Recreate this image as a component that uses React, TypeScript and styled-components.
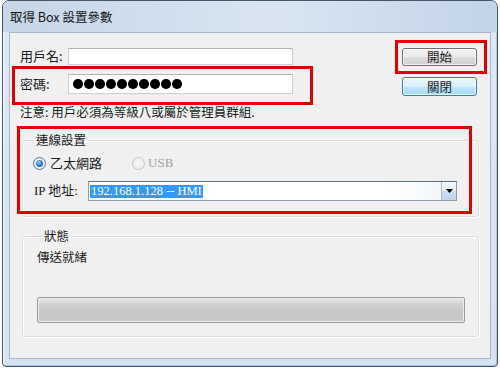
import React from "react";
import styled, { createGlobalStyle } from "styled-components";

const Global = createGlobalStyle`
  html, body { margin: 0; padding: 0; background: #ffffff; }
  body { font-family: "Noto Sans CJK TC", "Liberation Sans", sans-serif; font-size: 12px; color: #1a1a1a; }
  * { box-sizing: border-box; }
`;

const Window = styled.div`
  margin-left: 2px;
  width: 496px;
  height: 367px;
  border: 1px solid #45566a;
  border-radius: 7px 7px 4px 4px;
  background: linear-gradient(to bottom, #d9e5f2 0px, #c8d8ea 31px, #dde8f4 32px, #d4e2f1 100%);
  box-shadow: inset 1px 1px 0 #f4f8fc, inset -1px -1px 0 #a9c4e2;
  display: flex;
  flex-direction: column;
  overflow: hidden;
`;

const TitleBar = styled.div`
  height: 31px;
  padding-left: 7px;
  display: flex;
  align-items: center;
  font-size: 12.5px;
  color: #141414;
  background: linear-gradient(to right, #c6d5e7, #d9e5f2 55%, #c3d4e8);
`;

const Client = styled.div`
  margin: 0 6px;
  height: 327px;
  border: 1px solid #a8b7c8;
  background: #f0f0f0;
  display: flex;
  flex-direction: column;
`;

const TopSection = styled.div`
  display: flex;
  margin-top: 7px;
`;

const LeftCol = styled.div`
  margin-left: 2px;
  width: 301px;
  padding-top: 7px;
  display: flex;
  flex-direction: column;
`;

const FieldRow = styled.div<{ $h: number; $pad: number }>`
  height: ${(p) => p.$h}px;
  padding-left: ${(p) => p.$pad}px;
  display: flex;
  align-items: center;
`;

const Label = styled.span<{ $w: number }>`
  width: ${(p) => p.$w}px;
  line-height: 14px;
  font-size: 13px;
  flex: none;
`;

const TextBox = styled.div<{ $h: number }>`
  width: 225px;
  height: ${(p) => p.$h}px;
  background: #ffffff;
  border: 1px solid #c9cfd6;
  border-top-color: #abb3bc;
  display: flex;
  align-items: center;
  padding-left: 4px;
  gap: 1.5px;
`;

const Dot = styled.span`
  width: 9.5px;
  height: 9.5px;
  border-radius: 50%;
  background: #000;
  flex: none;
`;

const RedBox = styled.div`
  border: 3px solid #e00000;
  margin-top: 1px;
  height: 39px;
  padding: 5px 0 0 5px;
`;

const Note = styled.div`
  padding-left: 8px;
  line-height: 14px;
  font-size: 12.5px;
  white-space: nowrap;
`;

const RightCol = styled.div`
  margin-left: 82px;
  display: flex;
  flex-direction: column;
`;

const RedButtonBox = styled.div`
  border: 3px solid #e00000;
  width: 92px;
  height: 34px;
  padding: 5px 0 0 4px;
`;

const Button = styled.button<{ $focus?: boolean }>`
  width: 75px;
  height: ${(p) => (p.$focus ? 19 : 18)}px;
  margin: 0;
  padding: 0;
  font-family: "Noto Sans CJK TC", sans-serif;
  font-size: 12.5px;
  line-height: 14px;
  color: #1a1a1a;
  border-radius: 3px;
  border: 1px solid ${(p) => (p.$focus ? "#3c7fb1" : "#707070")};
  background: ${(p) =>
    p.$focus
      ? "linear-gradient(to bottom, #eaf6fd 0%, #d9f0fc 50%, #bee6fd 51%, #a7d9f5 100%)"
      : "linear-gradient(to bottom, #f2f2f2 0%, #ebebeb 50%, #dddddd 51%, #cfcfcf 100%)"};
  box-shadow: inset 0 0 0 1px rgba(255, 255, 255, 0.7);
`;

const CloseButton = styled(Button)`
  margin: 3px 0 0 7px;
`;

const GroupWrap = styled.div<{ $mt: number }>`
  position: relative;
  margin: ${(p) => p.$mt}px 11px 0 12px;
`;

const Group = styled.fieldset<{ $pl: number; $pb: number }>`
  margin: 0;
  min-width: 0;
  padding: 0 0 ${(p) => p.$pb}px ${(p) => p.$pl}px;
  border: 1px solid #d5dfe5;
  border-radius: 3px;
  box-shadow: 1px 1px 0 #ffffff, inset 1px 1px 0 #ffffff;
`;

const Legend = styled.legend<{ $ml: number }>`
  margin-left: ${(p) => p.$ml}px;
  padding: 0 2px;
  line-height: 14px;
  font-size: 12.5px;
`;

const RedOverlay = styled.div`
  position: absolute;
  left: -5px;
  top: -7px;
  width: 455px;
  height: 88px;
  border: 3px solid #e00000;
  pointer-events: none;
`;

const RadioRow = styled.div`
  margin-top: 8px;
  height: 16px;
  display: flex;
  align-items: center;
`;

const Radio = styled.span<{ $checked?: boolean; $disabled?: boolean }>`
  width: 13px;
  height: 13px;
  border-radius: 50%;
  flex: none;
  border: 1px solid ${(p) => (p.$disabled ? "#c6c6c6" : "#5e7894")};
  background: ${(p) =>
    p.$disabled
      ? "radial-gradient(circle at 50% 50%, #f7f7f7 0, #e9e9e9 100%)"
      : "radial-gradient(circle at 50% 50%, #ffffff 0, #dfe3e8 100%)"};
  display: flex;
  align-items: center;
  justify-content: center;
  &::after {
    content: "";
    display: ${(p) => (p.$checked ? "block" : "none")};
    width: 7px;
    height: 7px;
    border-radius: 50%;
    background: radial-gradient(circle at 40% 35%, #9fd0f7 0, #3c86cf 45%, #1c4f8a 100%);
  }
`;

const RadioLabel = styled.span<{ $disabled?: boolean }>`
  margin-left: ${(p) => (p.$disabled ? 3 : 4)}px;
  line-height: 14px;
  color: ${(p) => (p.$disabled ? "#a3a3a3" : "#1a1a1a")};
  font-family: ${(p) =>
    p.$disabled ? '"Liberation Serif", serif' : '"Noto Sans CJK TC", sans-serif'};
  font-size: 13px;
`;

const Spacer = styled.span<{ $w: number }>`
  width: ${(p) => p.$w}px;
  flex: none;
`;

const IPRow = styled.div`
  margin-top: 10px;
  height: 20px;
  display: flex;
  align-items: center;
`;

const IPLabel = styled.span`
  width: 55px;
  padding-left: 1px;
  line-height: 14px;
  font-family: "Liberation Serif", "Noto Sans CJK TC", serif;
  font-size: 13px;
  flex: none;
`;

const Combo = styled.div`
  width: 369px;
  height: 20px;
  border: 1px solid #8e9aa8;
  border-top-color: #5d6d7e;
  background: linear-gradient(to right, #ffffff 80%, #f1f5f9 100%);
  display: flex;
  align-items: center;
  padding-left: 1px;
`;

const Selected = styled.span`
  background: #3399ff;
  color: #ffffff;
  font-family: "Liberation Serif", serif;
  font-size: 12.5px;
  line-height: 13px;
  padding: 0 1px;
`;

const DropButton = styled.span`
  margin-left: auto;
  width: 15px;
  height: 18px;
  border-left: 1px solid #a8bdd2;
  background: linear-gradient(to bottom, #f4f9fe 0%, #e1eef9 50%, #c9e0f3 51%, #bcd6ee 100%);
  display: flex;
  align-items: center;
  justify-content: center;
`;

const StatusText = styled.div`
  margin-top: 7px;
  line-height: 14px;
  font-size: 12.5px;
`;

const Progress = styled.div`
  margin-top: 33px;
  width: 428px;
  height: 26px;
  border: 1px solid #9a9a9a;
  border-radius: 2px;
  background: linear-gradient(to bottom, #e9e9e9 0%, #d2d2d2 25%, #c6c6c6 60%, #c9c9c9 100%);
  box-shadow: inset 0 0 0 1px #ededed;
`;

export default function App() {
  return (
    <>
      <Global />
      <Window>
        <TitleBar>取得 Box 設置參數</TitleBar>
        <Client>
          <TopSection>
            <LeftCol>
              <FieldRow $h={18} $pad={8}>
                <Label $w={48}>用戶名:</Label>
                <TextBox $h={17} />
              </FieldRow>
              <RedBox>
                <FieldRow $h={20} $pad={0}>
                  <Label $w={48}>密碼:</Label>
                  <TextBox $h={20}>
                    {Array.from({ length: 10 }).map((_, i) => (
                      <Dot key={i} />
                    ))}
                  </TextBox>
                </FieldRow>
              </RedBox>
              <Note>注意: 用戶必須為等級八或屬於管理員群組.</Note>
            </LeftCol>
            <RightCol>
              <RedButtonBox>
                <Button>開始</Button>
              </RedButtonBox>
              <CloseButton $focus>關閉</CloseButton>
            </RightCol>
          </TopSection>

          <GroupWrap $mt={14}>
            <Group $pl={10} $pb={15}>
              <Legend $ml={1}>連線設置</Legend>
              <RadioRow>
                <Radio $checked />
                <RadioLabel>乙太網路</RadioLabel>
                <Spacer $w={30} />
                <Radio $disabled />
                <RadioLabel $disabled>USB</RadioLabel>
              </RadioRow>
              <IPRow>
                <IPLabel>IP 地址:</IPLabel>
                <Combo>
                  <Selected>192.168.1.128 -- HMI</Selected>
                  <DropButton>
                    <svg width="7" height="4" viewBox="0 0 7 4">
                      <path d="M0 0 H7 L3.5 4 Z" fill="#000" />
                    </svg>
                  </DropButton>
                </Combo>
              </IPRow>
            </Group>
            <RedOverlay />
          </GroupWrap>

          <GroupWrap $mt={12}>
            <Group $pl={14} $pb={13}>
              <Legend $ml={5}>狀態</Legend>
              <StatusText>傳送就緒</StatusText>
              <Progress />
            </Group>
          </GroupWrap>
        </Client>
      </Window>
    </>
  );
}
